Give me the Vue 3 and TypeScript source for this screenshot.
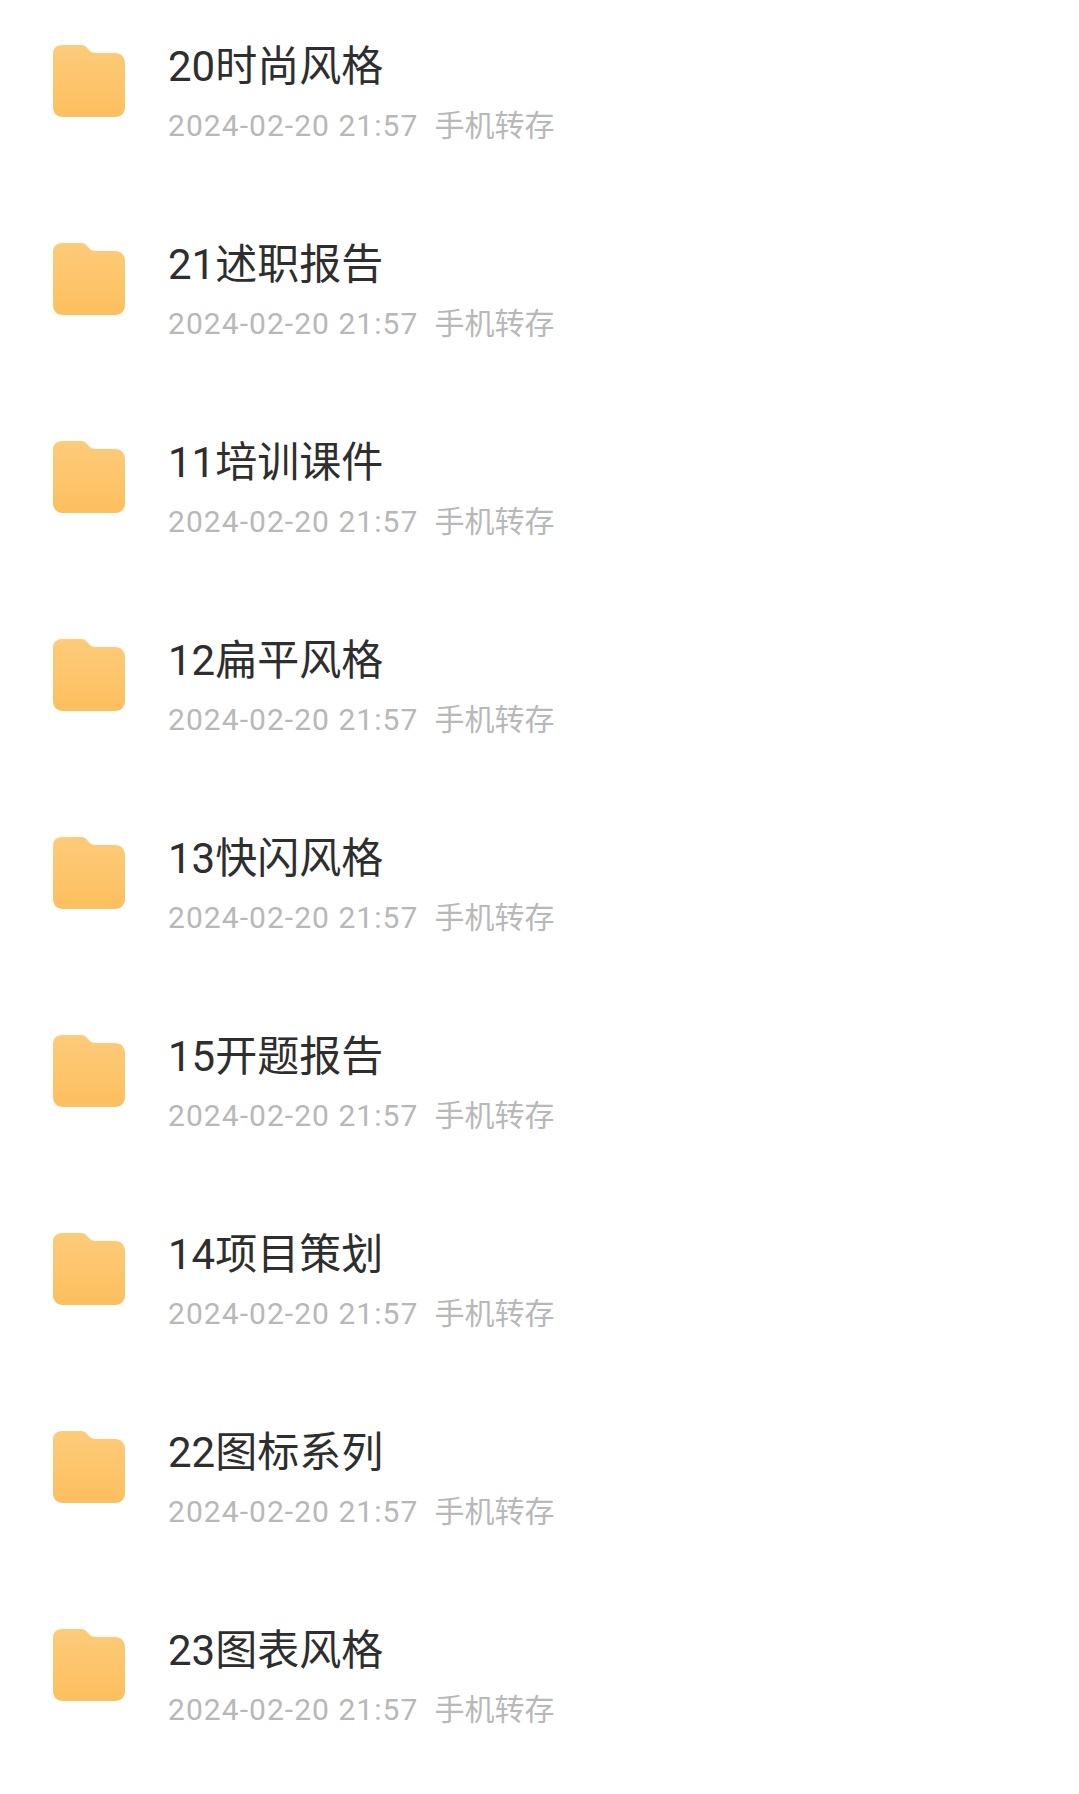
<script setup lang="ts">
const titles = [
  "20时尚风格",
  "21述职报告",
  "11培训课件",
  "12扁平风格",
  "13快闪风格",
  "15开题报告",
  "14项目策划",
  "22图标系列",
  "23图表风格",
];
</script>

<template>
  <div class="list">
    <div v-for="t in titles" :key="t" class="row">
      <svg class="folder" width="72" height="72" viewBox="0 0 72 72">
        <defs>
          <linearGradient id="fold" x1="0" y1="0" x2="0" y2="1">
            <stop offset="0" stop-color="#fdcb7a" />
            <stop offset="1" stop-color="#fdbf5e" />
          </linearGradient>
        </defs>
        <path
          d="M9 0H28C31 0 33 1.5 35 4C37 6.5 39 8 43 8H62C68 8 72 12 72 18V62C72 68 68 72 62 72H10C4 72 0 68 0 62V9C0 3.5 3.5 0 9 0Z"
          fill="url(#fold)"
        />
      </svg>
      <div class="info">
        <div class="title">{{ t }}</div>
        <div class="meta">
          <span class="date">2024-02-20 21:57</span>
          <span class="source">手机转存</span>
        </div>
      </div>
    </div>
  </div>
</template>

<style scoped>
.list {
  width: 1079px;
  height: 1794px;
  overflow: hidden;
  background: #fff;
  padding-top: 45px;
  box-sizing: border-box;
  font-family: Roboto, "Noto Sans CJK SC", sans-serif;
}

.row {
  display: flex;
  align-items: flex-start;
  height: 198px;
  padding-left: 53px;
}

.folder {
  flex: none;
}

.info {
  margin-left: 43px;
  margin-top: -4px;
}

.title {
  font-size: 42px;
  line-height: 52px;
  color: #2e2e2e;
}

.meta {
  margin-top: 13px;
  display: flex;
  gap: 16px;
  font-size: 30px;
  line-height: 40px;
  color: #b8b8b8;
}

.date {
  letter-spacing: 1.05px;
}
</style>
